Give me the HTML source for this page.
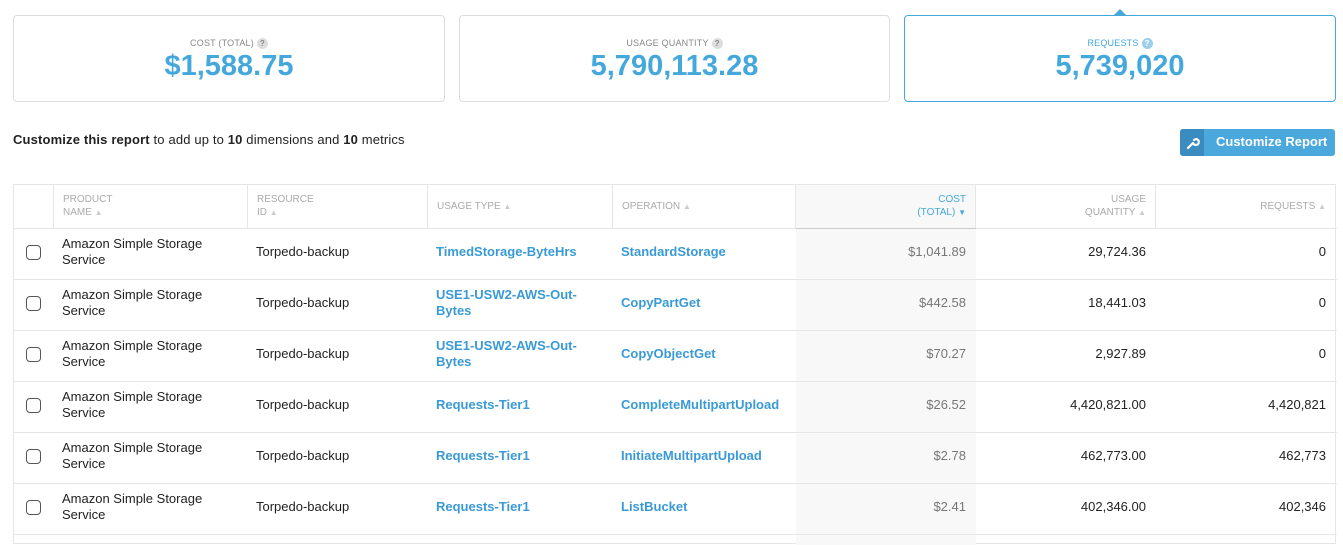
<!DOCTYPE html>
<html><head><meta charset="utf-8"><style>
*{box-sizing:border-box;margin:0;padding:0}
body{width:1343px;height:539px;overflow:hidden;background:#fff;font-family:"Liberation Sans",sans-serif;color:#222;position:relative}
.card{position:absolute;top:15px;height:87px;border:1px solid #ddd;border-radius:4px;text-align:center}
.card .lbl{font-size:9px;color:#888;margin-top:21px;letter-spacing:.2px;height:12px;line-height:12px}
.q{display:inline-block;width:11px;height:11px;border-radius:50%;background:#ddd;color:#888;font-size:8px;line-height:11px;vertical-align:middle;margin-left:3px;font-weight:bold}
.card .val{font-size:29px;color:#45a8dd;font-weight:bold;margin-top:1px;line-height:32px}
.sel{border-color:#45a8dd}
.sel .lbl{color:#45a8dd}
.sel .q{background:#9ccde9;color:#fff}
.arrow{position:absolute;left:1114px;top:9px;width:0;height:0;border-left:6px solid transparent;border-right:6px solid transparent;border-bottom:6px solid #45a8dd}
.intro{position:absolute;left:13px;top:132px;font-size:13px;color:#222;letter-spacing:.15px}
.btn{position:absolute;left:1180px;top:129px;width:155px;height:27px;border-radius:3px;background:#4aa8dc;color:#fff;font-size:13px;font-weight:bold;overflow:hidden}
.btn .ic{position:absolute;left:0;top:0;width:24px;height:27px;background:#3a8bbf}
.btn span{position:absolute;left:36px;top:5px}
.tbl{position:absolute;left:13px;top:184px;width:1323px;height:360px;border:1px solid #e6e6e6}
.vl{position:absolute;top:0;width:1px;height:44px;background:#e6e6e6}
.hl{position:absolute;left:0;width:1323px;height:1px;background:#e6e6e6}
.costbg{position:absolute;left:782px;top:0;width:180px;height:360px;background:#f8f8f8}
.h{position:absolute;font-size:10px;color:#aaa;line-height:13px}
.c{position:absolute;font-size:13px;line-height:16px}
.lk{color:#3a9ad6;font-weight:bold}
.r{text-align:right}
.cb{position:absolute;left:12px;width:15px;height:15px;border:1.5px solid #555;border-radius:4px}
.sa{font-size:8px;color:#ccc}
</style></head><body>
<div class="card" style="left:13px;width:432px"><div class="lbl">COST (TOTAL)<span class="q">?</span></div><div class="val">$1,588.75</div></div>
<div class="card" style="left:459px;width:431px"><div class="lbl">USAGE QUANTITY<span class="q">?</span></div><div class="val">5,790,113.28</div></div>
<div class="arrow"></div>
<div class="card sel" style="left:904px;width:432px"><div class="lbl">REQUESTS<span class="q">?</span></div><div class="val">5,739,020</div></div>
<div class="intro"><b>Customize this report</b> to add up to <b>10</b> dimensions and <b>10</b> metrics</div>
<div class="btn"><div class="ic"><svg width="24" height="27" viewBox="0 0 24 27"><path d="M8 19 L13 14 M13 14 a3 3 0 1 0 3 -4 l-2 1" stroke="#fff" stroke-width="2.2" fill="none" stroke-linecap="round"/></svg></div><span>Customize Report</span></div>
<div class="tbl">
<div class="costbg"></div>
<div class="vl" style="left:39px"></div><div class="vl" style="left:233px"></div><div class="vl" style="left:413px"></div><div class="vl" style="left:598px"></div><div class="vl" style="left:781px"></div><div class="vl" style="left:961px"></div><div class="vl" style="left:1141px"></div>
<div class="hl" style="top:43px"></div><div class="hl" style="top:94px"></div><div class="hl" style="top:145px"></div><div class="hl" style="top:196px"></div><div class="hl" style="top:247px"></div><div class="hl" style="top:298px"></div><div class="hl" style="top:349px"></div>
<div class="hl" style="top:43px;left:782px;width:180px;background:#ccc"></div>
<div class="h" style="left:49px;top:8px">PRODUCT<br>NAME <span class="sa">&#9650;</span></div>
<div class="h" style="left:243px;top:8px">RESOURCE<br>ID <span class="sa">&#9650;</span></div>
<div class="h" style="left:423px;top:15px">USAGE TYPE <span class="sa">&#9650;</span></div>
<div class="h" style="left:608px;top:15px">OPERATION <span class="sa">&#9650;</span></div>
<div class="h r" style="left:782px;width:170px;top:8px;color:#45a8dd">COST<br>(TOTAL) <span style="font-size:8px">&#9660;</span></div>
<div class="h r" style="left:962px;width:170px;top:8px">USAGE<br>QUANTITY <span class="sa">&#9650;</span></div>
<div class="h r" style="left:1142px;width:170px;top:15px">REQUESTS <span class="sa">&#9650;</span></div>

<div class="cb" style="top:60px"></div><div class="c" style="left:48px;top:51px">Amazon Simple Storage<br>Service</div><div class="c" style="left:242px;top:59px">Torpedo-backup</div><div class="c lk" style="left:422px;top:59px">TimedStorage-ByteHrs</div><div class="c lk" style="left:607px;top:59px">StandardStorage</div><div class="c r" style="left:782px;width:170px;top:59px;color:#777">$1,041.89</div><div class="c r" style="left:962px;width:170px;top:59px">29,724.36</div><div class="c r" style="left:1142px;width:170px;top:59px">0</div>

<div class="cb" style="top:111px"></div><div class="c" style="left:48px;top:102px">Amazon Simple Storage<br>Service</div><div class="c" style="left:242px;top:110px">Torpedo-backup</div><div class="c lk" style="left:422px;top:102px">USE1-USW2-AWS-Out-<br>Bytes</div><div class="c lk" style="left:607px;top:110px">CopyPartGet</div><div class="c r" style="left:782px;width:170px;top:110px;color:#777">$442.58</div><div class="c r" style="left:962px;width:170px;top:110px">18,441.03</div><div class="c r" style="left:1142px;width:170px;top:110px">0</div>

<div class="cb" style="top:162px"></div><div class="c" style="left:48px;top:153px">Amazon Simple Storage<br>Service</div><div class="c" style="left:242px;top:161px">Torpedo-backup</div><div class="c lk" style="left:422px;top:153px">USE1-USW2-AWS-Out-<br>Bytes</div><div class="c lk" style="left:607px;top:161px">CopyObjectGet</div><div class="c r" style="left:782px;width:170px;top:161px;color:#777">$70.27</div><div class="c r" style="left:962px;width:170px;top:161px">2,927.89</div><div class="c r" style="left:1142px;width:170px;top:161px">0</div>

<div class="cb" style="top:213px"></div><div class="c" style="left:48px;top:204px">Amazon Simple Storage<br>Service</div><div class="c" style="left:242px;top:212px">Torpedo-backup</div><div class="c lk" style="left:422px;top:212px">Requests-Tier1</div><div class="c lk" style="left:607px;top:212px">CompleteMultipartUpload</div><div class="c r" style="left:782px;width:170px;top:212px;color:#777">$26.52</div><div class="c r" style="left:962px;width:170px;top:212px">4,420,821.00</div><div class="c r" style="left:1142px;width:170px;top:212px">4,420,821</div>

<div class="cb" style="top:264px"></div><div class="c" style="left:48px;top:255px">Amazon Simple Storage<br>Service</div><div class="c" style="left:242px;top:263px">Torpedo-backup</div><div class="c lk" style="left:422px;top:263px">Requests-Tier1</div><div class="c lk" style="left:607px;top:263px">InitiateMultipartUpload</div><div class="c r" style="left:782px;width:170px;top:263px;color:#777">$2.78</div><div class="c r" style="left:962px;width:170px;top:263px">462,773.00</div><div class="c r" style="left:1142px;width:170px;top:263px">462,773</div>

<div class="cb" style="top:315px"></div><div class="c" style="left:48px;top:306px">Amazon Simple Storage<br>Service</div><div class="c" style="left:242px;top:314px">Torpedo-backup</div><div class="c lk" style="left:422px;top:314px">Requests-Tier1</div><div class="c lk" style="left:607px;top:314px">ListBucket</div><div class="c r" style="left:782px;width:170px;top:314px;color:#777">$2.41</div><div class="c r" style="left:962px;width:170px;top:314px">402,346.00</div><div class="c r" style="left:1142px;width:170px;top:314px">402,346</div>
</div>
</body></html>
